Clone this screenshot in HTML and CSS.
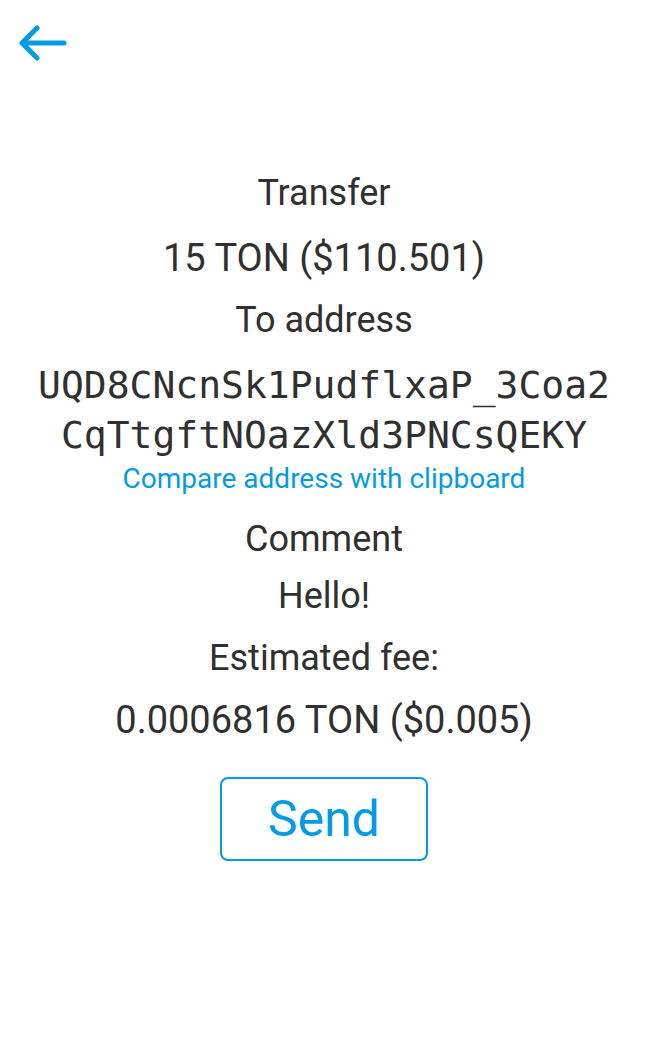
FILE: index.html
```html
<!DOCTYPE html>
<html>
<head>
<meta charset="utf-8">
<link rel="stylesheet" href="styles.css">
</head>
<body>
<div class="page">
  <header class="topbar">
    <button class="back" aria-label="Back">
      <svg width="50" height="36" viewBox="0 0 50 36">
        <path d="M4 18 H46 M19 3 L4 18 L19 33" fill="none" stroke="#039be5" stroke-width="5" stroke-linecap="round" stroke-linejoin="round"/>
      </svg>
    </button>
  </header>
  <main class="content">
    <div class="row label">Transfer</div>
    <div class="row value amount">15 TON ($110.501)</div>
    <div class="row label to">To address</div>
    <div class="address">UQD8CNcnSk1PudflxaP_3Coa2<br>CqTtgftNOazXld3PNCsQEKY</div>
    <a class="compare">Compare address with clipboard</a>
    <div class="row label comment">Comment</div>
    <div class="row value hello">Hello!</div>
    <div class="row label fee">Estimated fee:</div>
    <div class="row value feeval">0.0006816 TON ($0.005)</div>
    <button class="send">Send</button>
  </main>
</div>
</body>
</html>
```

FILE: styles.css
```css
html, body {
  margin: 0;
  padding: 0;
  background: #ffffff;
}
body {
  font-family: Roboto, "Noto Sans", sans-serif;
  color: #303030;
}
.page {
  width: 648px;
  min-height: 1037px;
}
.topbar {
  height: 88px;
  padding: 25px 0 0 18px;
  box-sizing: border-box;
}
.back {
  border: 0;
  background: none;
  padding: 0;
  cursor: pointer;
  display: block;
}
.back svg { display: block; }
.content {
  display: flex;
  flex-direction: column;
  align-items: center;
  padding-top: 83px;
}
.row {
  font-size: 36px;
  line-height: 44px;
}
.value { font-size: 38px; }
.amount { margin-top: 21px; }
.to { margin-top: 18px; }
.address {
  font-family: "DejaVu Sans Mono", "Liberation Mono", monospace;
  font-size: 38px;
  line-height: 50px;
  text-align: center;
  margin-top: 18px;
}
.compare {
  color: #039be5;
  font-size: 28px;
  line-height: 32px;
  margin-top: 3px;
}
.comment { margin-top: 22px; }
.hello { margin-top: 13px; font-size: 36px; }
.fee { margin-top: 18px; }
.feeval { margin-top: 18px; }
.send {
  margin-top: 35px;
  width: 208px;
  height: 84px;
  border: 2px solid #039be5;
  border-radius: 8px;
  background: #fff;
  color: #039be5;
  font-family: Roboto, sans-serif;
  font-size: 50px;
  padding: 0;
  cursor: pointer;
}
```
